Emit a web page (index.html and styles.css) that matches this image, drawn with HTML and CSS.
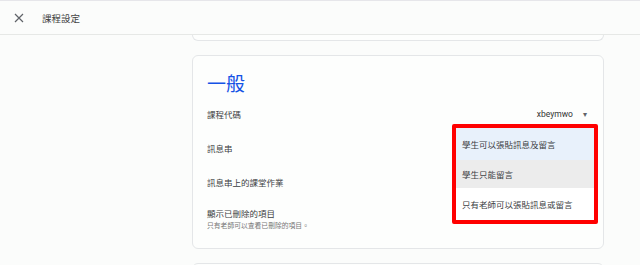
FILE: index.html
```html
<!DOCTYPE html>
<html lang="zh-Hant">
<head>
    <meta charset="UTF-8">
    <title>課程設定</title>
    <link rel="stylesheet" href="styles.css">
</head>
<body>
    <div class="topbar">
        <button class="close" aria-label="關閉">
            <svg width="10" height="10" viewBox="0 0 10 10">
                <path d="M1 1 L9 9 M9 1 L1 9" stroke="#5f6368" stroke-width="1.2" fill="none"/>
            </svg>
        </button>
        <span class="page-title">課程設定</span>
    </div>

    <div class="main">
        <div class="card card-prev"></div>

        <div class="card card-general">
            <h2 class="heading">一般</h2>

            <div class="row">
                <span class="label">課程代碼</span>
                <span class="code">xbeymwo <span class="caret">&#9662;</span></span>
            </div>
            <div class="row">
                <span class="label">訊息串</span>
            </div>
            <div class="row">
                <span class="label">訊息串上的課堂作業</span>
            </div>
            <div class="row row-tall">
                <div>
                    <div class="label">顯示已刪除的項目</div>
                    <div class="sub">只有老師可以查看已刪除的項目。</div>
                </div>
            </div>

            <!-- stream permission menu, opened -->
            <div class="menu">
                <div class="item selected">學生可以張貼訊息及留言</div>
                <div class="item hovered">學生只能留言</div>
                <div class="item">只有老師可以張貼訊息或留言</div>
            </div>
        </div>

        <div class="card card-next"></div>
    </div>
</body>
</html>
```

FILE: styles.css
```css
body {
    margin: 0;
    height: 265px;
    overflow: hidden;
    background-color: #fbfcfb;
    font-family: "Noto Sans CJK TC", "Noto Sans", sans-serif;
    color: #3c4043;
}

.topbar {
    height: 33px;
    border-top: 1px solid #e6e6ea;
    border-bottom: 1px solid #e6e8e6;
    display: flex;
    align-items: center;
}

.close {
    border: none;
    background: none;
    padding: 0;
    margin-left: 14px;
    width: 10px;
    height: 10px;
    display: flex;
}

.page-title {
    margin-left: 18px;
    font-size: 9.5px;
    color: #444;
}

.main {
    padding-left: 192px;
    width: 412px;
    height: 230px;
    overflow: hidden;
}

.card {
    background-color: #fdfefd;
    border: 1px solid #e4e6e8;
    border-radius: 6px;
}

.card-prev {
    height: 20px;
    margin-top: -15px;
    border-top: none;
    border-top-left-radius: 0;
    border-top-right-radius: 0;
}

.card-general {
    position: relative;
    margin-top: 14px;
    padding: 12px 14px 11px;
}

.heading {
    margin: 0;
    font-size: 19px;
    font-weight: 400;
    line-height: 29px;
    color: #1553e6;
}

.row {
    height: 34px;
    display: flex;
    align-items: center;
    justify-content: space-between;
    font-size: 8.5px;
}

.row-tall {
    height: 38px;
}

.label {
    font-size: 8.5px;
    color: #3c4043;
}

.sub {
    font-size: 6.8px;
    color: #777;
    margin-top: 1px;
}

.code {
    font-family: Roboto, sans-serif;
    font-size: 8.5px;
    color: #333;
    margin-right: 2px;
}

.caret {
    font-size: 8px;
    color: #5f6368;
    margin-left: 8px;
}

.menu {
    position: absolute;
    left: 259px;
    top: 68px;
    width: 138px;
    border: 4px solid #ff0000;
    border-radius: 2px;
    background-color: #fff;
}

.item {
    height: 30px;
    display: flex;
    align-items: center;
    padding-left: 6px;
    font-size: 8.5px;
    color: #3c4043;
}

.item.selected {
    height: 32px;
    background-color: #e8f1fb;
}

.item.hovered {
    height: 28px;
    background-color: #ececec;
}

.item:last-child {
    height: 32px;
}

.card-next {
    margin-top: 14px;
    height: 40px;
}
```
